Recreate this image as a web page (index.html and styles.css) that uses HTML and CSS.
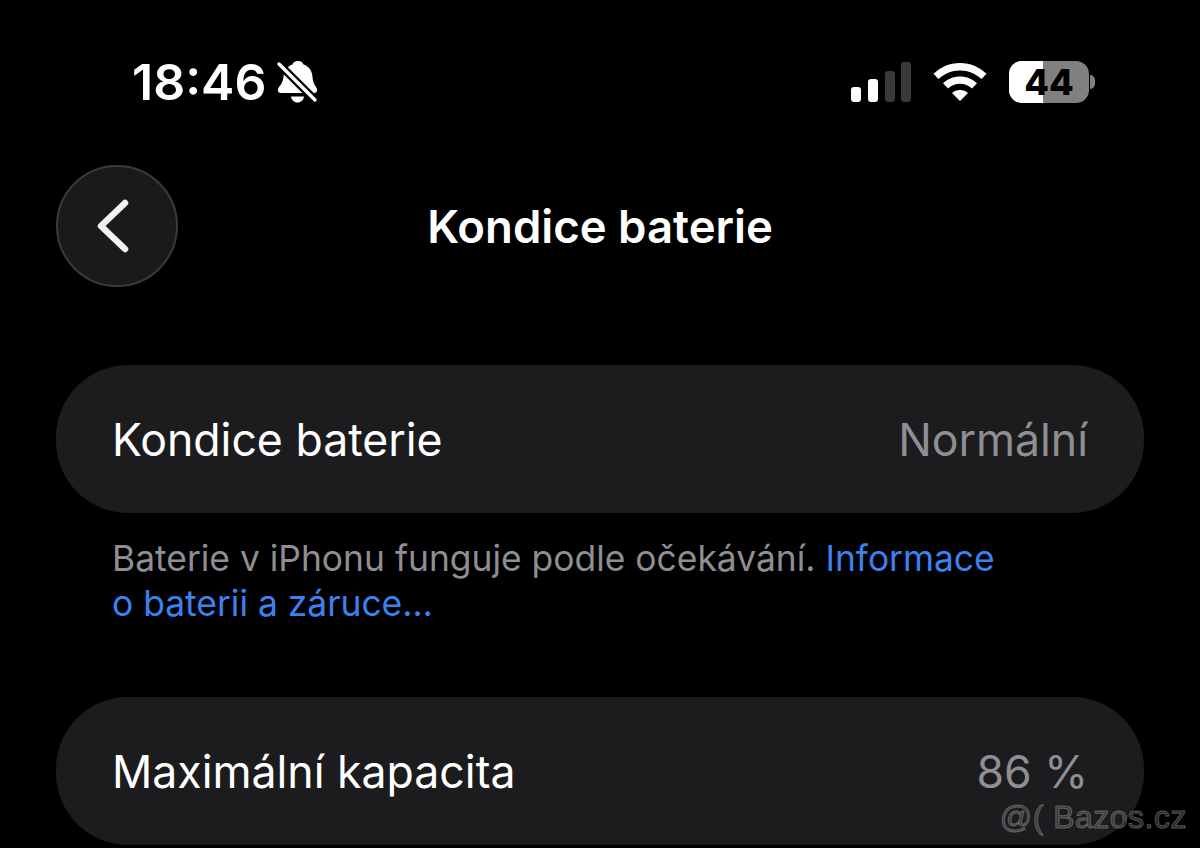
FILE: index.html
```html
<!DOCTYPE html>
<html lang="cs">
  <head>
    <meta charset="UTF-8" />
    <meta name="viewport" content="width=device-width, initial-scale=1.0" />
    <title>Kondice baterie</title>
    <link rel="stylesheet" href="styles.css">
  </head>
  <body>
    <div class="screen">
      <header class="status-bar">
        <div class="status-left">
          <span class="time">18:46</span>
          <svg class="bell" width="42" height="44" viewBox="0 0 42 44">
            <path d="M22 1c3 0 5 1.500 5.500 3.500C33.500 6.500 36 11 36.500 17c.3 4.500 1.500 7.500 3.500 10 1.800 2.300 1.500 6-2 6H5c-3.500 0-3.800-3.700-2-6 2.500-3 4-6 4.500-10 .5-6 3.500-10.500 9-12.500C17 2.500 19 1 22 1z" fill="#fff"/>
            <path d="M15 36.500h13c-.5 3.500-3 6-6.500 6s-6-2.500-6.500-6z" fill="#fff"/>
            <path d="M2 3 40 41" stroke="#000" stroke-width="8"/>
            <path d="M3 4 39 40" stroke="#fff" stroke-width="3.400" stroke-linecap="round"/>
          </svg>
        </div>
        <div class="status-right">
          <svg class="signal" width="60" height="40" viewBox="0 0 60 40">
            <rect x="0" y="25" width="10" height="15" rx="3" fill="#fff"/>
            <rect x="17" y="17" width="10" height="23" rx="3" fill="#fff"/>
            <rect x="34" y="9" width="10" height="31" rx="3" fill="#3a3a3a"/>
            <rect x="50" y="0" width="10" height="40" rx="3" fill="#3a3a3a"/>
          </svg>
          <svg class="wifi" width="54" height="38" viewBox="0 0 54 38">
            <path d="M27 0c10 0 19.500 4 26.500 10.800l-5 5.200C42.800 10.600 35.200 7.400 27 7.400S11.200 10.600 5.500 16L.5 10.800C7.500 4 17 0 27 0z" fill="#fff"/>
            <path d="M27 13.500c6.500 0 12.500 2.500 17 6.800l-5 5.200C35.800 22.500 31.500 20.800 27 20.800s-8.800 1.700-12 4.700l-5-5.200c4.500-4.300 10.500-6.800 17-6.800z" fill="#fff"/>
            <path d="M27 27c3 0 5.800 1.100 8 3l-8 8-8-8c2.200-1.900 5-3 8-3z" fill="#fff"/>
          </svg>
          <div class="battery">
            <div class="battery-body">
              <div class="battery-fill"></div>
              <span class="battery-level">44</span>
            </div>
            <div class="battery-cap"></div>
          </div>
        </div>
      </header>

      <nav class="nav-bar">
        <button class="back-button" type="button" aria-label="Zpět">
          <svg width="34" height="54" viewBox="0 0 34 54">
            <path d="M29 4 5 27l24 23" fill="none" stroke="#f2f2f2" stroke-width="6.500" stroke-linecap="round" stroke-linejoin="round"/>
          </svg>
        </button>
        <h1 class="nav-title">Kondice baterie</h1>
      </nav>

      <section class="card">
        <span class="card-label">Kondice baterie</span>
        <span class="card-value">Normální</span>
      </section>
      <p class="note">Baterie v iPhonu funguje podle očekávání. <a href="#">Informace<br>o baterii a záruce…</a></p>

      <section class="card">
        <span class="card-label">Maximální kapacita</span>
        <span class="card-value">86 %</span>
      </section>

      <div class="watermark">@( Bazos.cz</div>
    </div>
  </body>
</html>
```

FILE: styles.css
```css
* {
  box-sizing: border-box;
}
html,
body {
  margin: 0;
  height: 100%;
  overflow: hidden;
  background: #000;
}
.screen {
  position: relative;
  height: 848px;
  padding: 0 56px;
  overflow: hidden;
  color: #fff;
  font-family: Inter, "Liberation Sans", sans-serif;
}
.status-bar {
  display: flex;
  justify-content: space-between;
  align-items: center;
  height: 164px;
  padding: 0 49px 0 76px;
}
.status-left {
  display: flex;
  align-items: center;
  gap: 10px;
}
.time {
  font-size: 50px;
  font-weight: 600;
  line-height: 60px;
}
.status-right {
  display: flex;
  align-items: center;
  gap: 22px;
}
.battery {
  display: flex;
  align-items: center;
  gap: 1px;
}
.battery-body {
  position: relative;
  width: 80px;
  height: 42px;
  border-radius: 13px;
  background: #808080;
  overflow: hidden;
}
.battery-fill {
  width: 43%;
  height: 100%;
  background: #fff;
}
.battery-level {
  position: absolute;
  inset: 0;
  text-align: center;
  color: #000;
  font-size: 36px;
  font-weight: 800;
  line-height: 42px;
}
.battery-cap {
  width: 5px;
  height: 14px;
  border-radius: 0 5px 5px 0;
  background: #808080;
}
.nav-bar {
  display: flex;
  align-items: center;
  position: relative;
  height: 124px;
}
.back-button {
  display: flex;
  align-items: center;
  justify-content: center;
  width: 122px;
  height: 122px;
  padding: 0 8px 0 0;
  border: 2px solid #3a3a3a;
  border-radius: 50%;
  background: #1a1a1b;
}
.nav-title {
  position: absolute;
  left: 0;
  right: 0;
  margin: 0;
  text-align: center;
  font-size: 45.500px;
  font-weight: 600;
}
.card {
  display: flex;
  justify-content: space-between;
  align-items: center;
  height: 148px;
  margin-top: 77px;
  padding: 1px 56px 0 56px;
  border-radius: 72px;
  background: #1c1c1e;
  font-size: 44.600px;
}
.card-value {
  color: #8e8e93;
}
.note {
  margin: 23px 0 0;
  height: 161px;
  padding: 0 56px;
  color: #8e8e93;
  font-size: 35.400px;
  line-height: 45px;
}
.note + .card {
  margin-top: 0;
}
.note a {
  color: #3b82f0;
  text-decoration: none;
}
.watermark {
  position: absolute;
  right: 13px;
  bottom: 11px;
  color: rgba(255, 255, 255, 0.12);
  -webkit-text-stroke: 1px rgba(150, 150, 150, 0.55);
  font-family: "Liberation Sans", sans-serif;
  font-size: 32px;
  line-height: 40px;
  letter-spacing: 0.500px;
}
```
